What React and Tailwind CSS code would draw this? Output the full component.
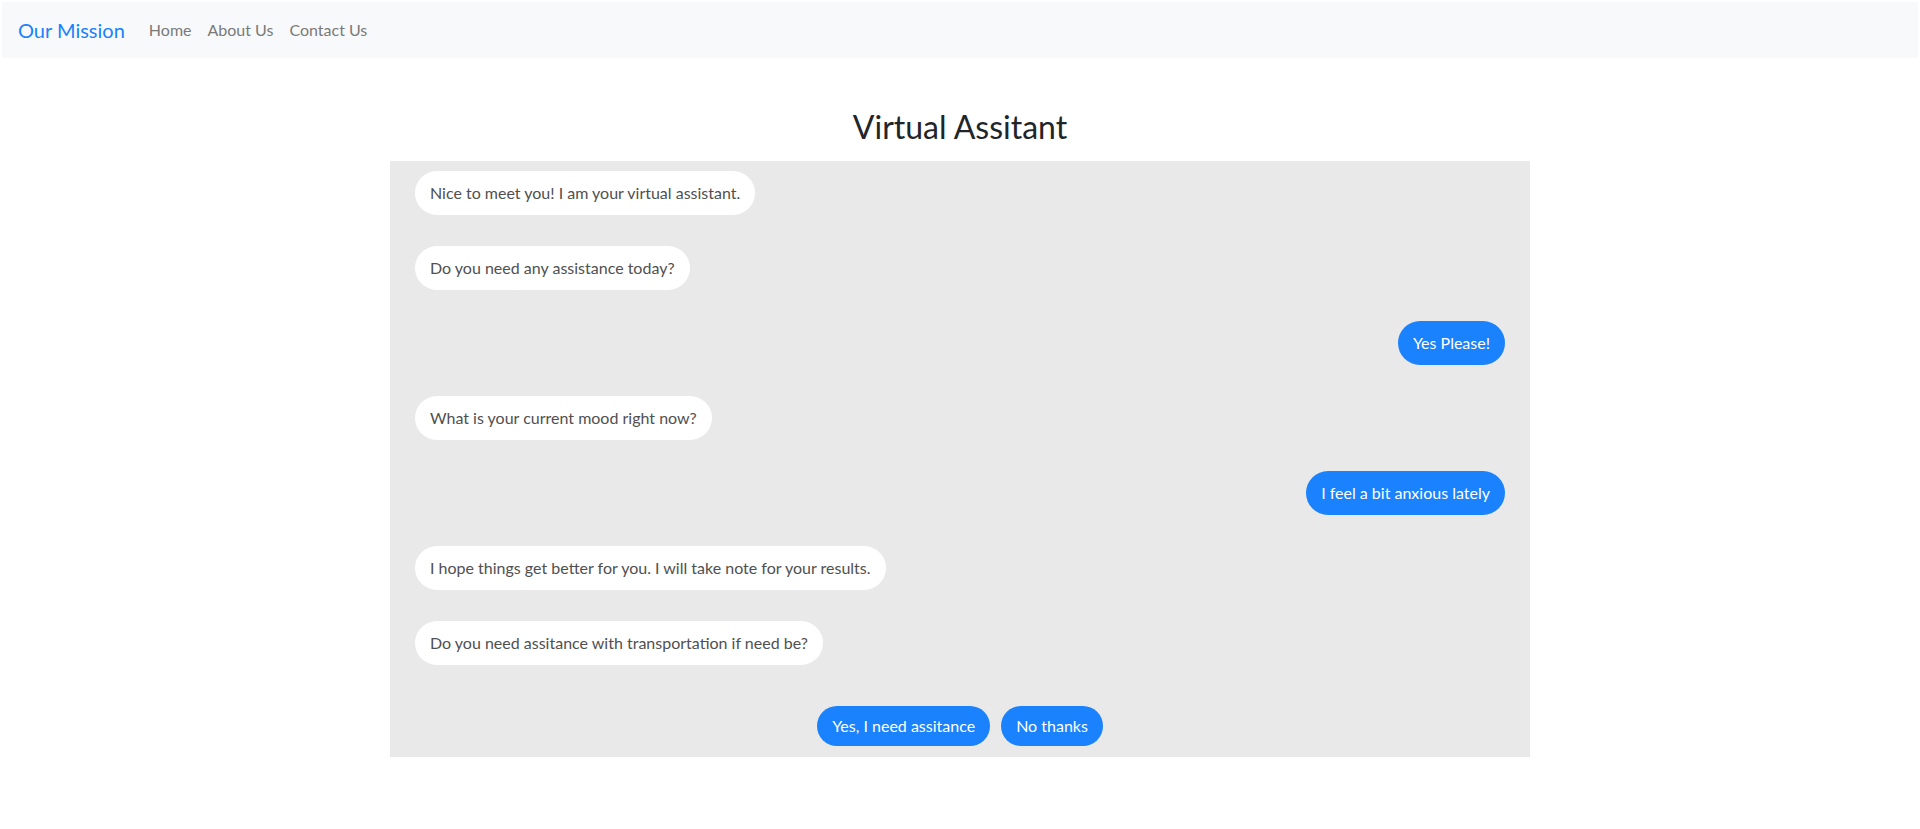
import React from "react";

const font = { fontFamily: '"Segoe UI", Lato, "Noto Sans", "Liberation Sans", sans-serif' };

function Bot({ children }) {
  return (
    <div className="flex justify-start">
      <div className="bg-white text-[#505050] text-[16px] leading-[24px] px-[15px] py-[10px] rounded-[22px]">{children}</div>
    </div>
  );
}

function User({ children }) {
  return (
    <div className="flex justify-end">
      <div className="bg-[#1982fc] text-white text-[16px] leading-[24px] px-[15px] py-[10px] rounded-[22px]">{children}</div>
    </div>
  );
}

export default function App() {
  return (
    <div className="min-h-[829px] bg-white px-[2px] pt-[2px]" style={font}>
      <nav className="h-[56px] bg-[#f8f9fa] flex items-center px-[16px]">
        <span className="text-[20px] text-[#1982fc] mr-[24px]">Our Mission</span>
        <div className="flex items-center gap-[16px] text-[16px] text-[#7a7a7a]">
          <span>Home</span>
          <span>About Us</span>
          <span>Contact Us</span>
        </div>
      </nav>
      <h2 className="text-center text-[32px] leading-[38px] text-[#212529] mt-[50px] mb-[15px]">Virtual Assitant</h2>
      <div className="w-[1140px] mx-auto bg-[#e9e9e9] px-[25px] pt-[10px] pb-[11px] flex flex-col gap-[31px]">
        <Bot>Nice to meet you! I am your virtual assistant.</Bot>
        <Bot>Do you need any assistance today?</Bot>
        <User>Yes Please!</User>
        <Bot>What is your current mood right now?</Bot>
        <User>I feel a bit anxious lately</User>
        <Bot>I hope things get better for you. I will take note for your results.</Bot>
        <Bot>Do you need assitance with transportation if need be?</Bot>
        <div className="flex justify-center gap-[11px] mt-[10px]">
          <button className="bg-[#1982fc] text-white text-[16px] leading-[24px] px-[15px] py-[8px] rounded-[21px]">Yes, I need assitance</button>
          <button className="bg-[#1982fc] text-white text-[16px] leading-[24px] px-[15px] py-[8px] rounded-[21px]">No thanks</button>
        </div>
      </div>
    </div>
  );
}
